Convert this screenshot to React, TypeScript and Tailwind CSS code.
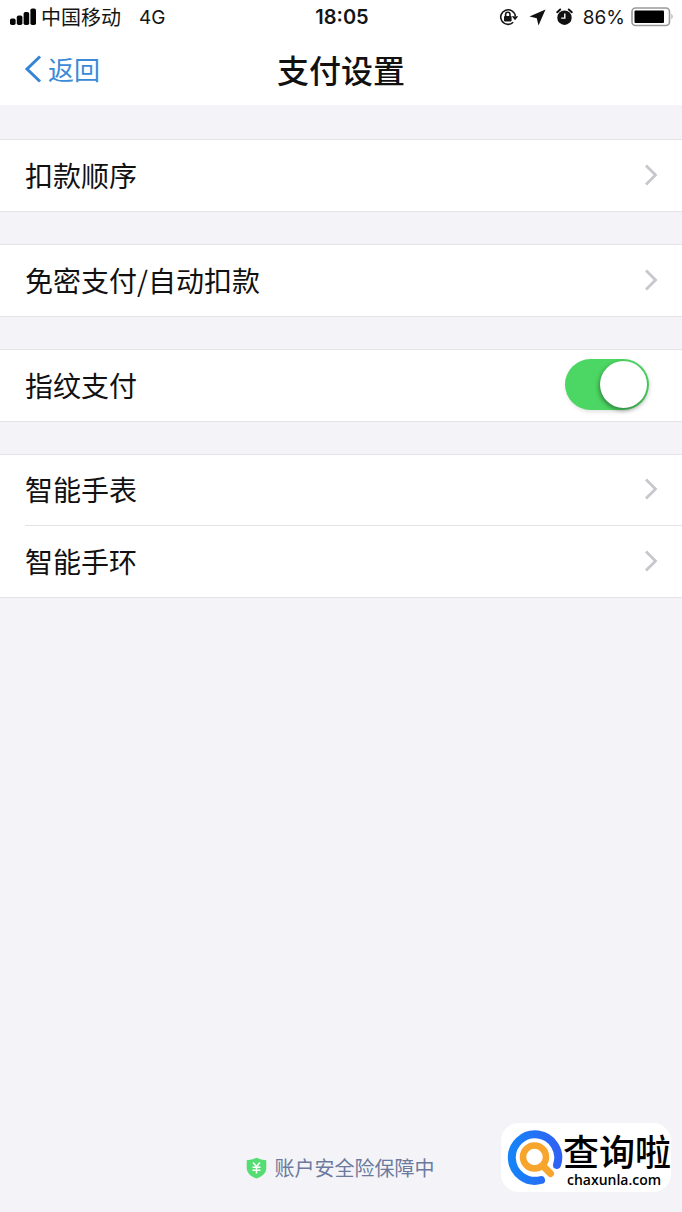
import { useState } from "react";

const groups = [
  [{ id: "order", title: "扣款顺序" }],
  [{ id: "auto", title: "免密支付/自动扣款" }],
  [{ id: "finger", title: "指纹支付", toggle: true }],
  [
    { id: "watch", title: "智能手表" },
    { id: "band", title: "智能手环" },
  ],
];

function StatusBar() {
  return (
    <div className="grid grid-cols-[1fr_auto_1fr] items-center h-[34px] pl-[10px] pr-2 font-['Inter','Noto_Sans_CJK_SC',sans-serif] text-[20px] leading-none text-[#151515]">
      <div className="flex items-center">
        <svg className="w-[27px] h-[18px] shrink-0" viewBox="0 0 27 18" fill="#050505">
          <rect x="0" y="10.5" width="5.6" height="6.5" rx="1.8" />
          <rect x="6.8" y="7.5" width="5.6" height="9.5" rx="1.8" />
          <rect x="13.6" y="4" width="5.6" height="13" rx="1.8" />
          <rect x="20.4" y="0.5" width="5.6" height="16.5" rx="1.8" />
        </svg>
        <span className="ml-1 font-['Noto_Sans_CJK_SC',sans-serif]">中国移动</span>
        <span className="ml-[18px] text-[19px]">4G</span>
      </div>
      <div className="font-semibold">18:05</div>
      <div className="flex items-center justify-end">
        {/* Rotation lock */}
        <svg className="w-[20px] h-[18px] shrink-0" viewBox="0 0 20 18" fill="none" stroke="#151515">
          <path d="M14.2 14.2A7.3 7.3 0 1 1 16.3 8.2" strokeWidth="1.6" />
          <path d="M12.8 8.2h6.4l-3.2 4z" fill="#151515" stroke="none" />
          <rect x="5" y="8" width="7.6" height="5.4" rx="0.8" fill="#151515" stroke="none" />
          <path d="M6.6 8V6.4a2.2 2.2 0 0 1 4.4 0V8" strokeWidth="1.6" />
        </svg>
        {/* Location arrow */}
        <svg className="ml-[10px] w-[17px] h-[17px] shrink-0" viewBox="0 0 17 17" fill="#111">
          <path d="M16.5 0.5 0.5 7.6l7.3 1.6 1.7 7.3z" />
        </svg>
        {/* Alarm */}
        <svg className="ml-[10px] w-[17px] h-[18px] shrink-0" viewBox="0 0 17 18">
          <circle cx="8.5" cy="9.7" r="7.2" fill="#111" />
          <path d="M1.2 4.2 4.2 1.5M15.8 4.2l-3-2.7" stroke="#111" strokeWidth="2" strokeLinecap="round" />
          <path d="M8.8 5.5v4.6H5.2" fill="none" stroke="#fff" strokeWidth="1.4" />
        </svg>
        <span className="ml-[10px] text-[19px]">86%</span>
        <svg className="ml-[6px] w-[43px] h-[20px] shrink-0" viewBox="0 0 43 20">
          <rect x="1" y="1" width="37.5" height="17.5" rx="3.5" fill="#fff" stroke="#9a9a9a" strokeWidth="1.6" />
          <rect x="3.5" y="3.5" width="29.5" height="12.5" rx="1" fill="#000" />
          <path d="M40.5 6.5q2.2 3 0 6z" fill="#9a9a9a" />
        </svg>
      </div>
    </div>
  );
}

function Chevron() {
  return (
    <svg className="w-[14px] h-[22px] shrink-0" viewBox="0 0 14 22" fill="none" stroke="#c7c7cc" strokeWidth="2.8">
      <path d="M2 1.5 11.5 11 2 20.5" />
    </svg>
  );
}

function Watermark() {
  return (
    <div className="absolute right-[11px] bottom-5 flex items-center h-[69px] pl-[6px] rounded-[18px] bg-white text-black">
      <svg className="w-[56px] h-[56px] shrink-0" viewBox="0 0 56 56" fill="none">
        <defs>
          <linearGradient id="ring" x1="0" y1="0" x2="1" y2="0">
            <stop offset="0" stopColor="#1683f8" />
            <stop offset="1" stopColor="#2f62f4" />
          </linearGradient>
        </defs>
        <path d="M50 35A23.2 23.2 0 1 0 34 50" stroke="url(#ring)" strokeWidth="8" strokeLinecap="round" />
        <circle cx="27.5" cy="27" r="11.5" stroke="#f7a52c" strokeWidth="6.5" />
        <path d="m36 36 7.5 7.5" stroke="#f7a52c" strokeWidth="7" strokeLinecap="round" />
      </svg>
      <div className="flex flex-col pt-[5px]">
        <span className="font-['Noto_Sans_CJK_SC',sans-serif] text-[36px] leading-[40px] font-medium">查询啦</span>
        <span className="pl-1 font-['Open_Sans',sans-serif] text-[14px] leading-5 font-semibold">chaxunla.com</span>
      </div>
    </div>
  );
}

export default function App() {
  const [fingerprint, setFingerprint] = useState(true);

  return (
    <div className="relative flex min-h-screen flex-col bg-[#f4f4f8] font-['Noto_Sans_CJK_SC',sans-serif] text-[#111]">
      <header className="bg-white">
        <StatusBar />
        <div className="grid grid-cols-[1fr_auto_1fr] items-center h-[71px] px-6 pb-[2px]">
          <a href="#" className="inline-flex items-center gap-[6px] text-[26px] leading-none text-[#3b8ad8]">
            <svg className="w-[18px] h-[28px] shrink-0" viewBox="0 0 18 28" fill="none" stroke="#3584d6" strokeWidth="3">
              <path d="M16 1.5 3 14l13 12.5" />
            </svg>
            <span>返回</span>
          </a>
          <h1 className="text-[32px] leading-none font-medium">支付设置</h1>
        </div>
      </header>

      <main className="flex flex-col gap-8 pt-[34px] text-[28px]">
        {groups.map((items) => (
          <section key={items[0].id} className="border-y border-[#e4e4e8] bg-white pl-[25px]">
            <div className="divide-y divide-[#e4e4e8]">
              {items.map((item) =>
                item.toggle ? (
                  <label key={item.id} className="flex items-center justify-between h-[71px] pr-[33px] pb-[2px] cursor-pointer">
                    <span>{item.title}</span>
                    <input
                      type="checkbox"
                      className="peer sr-only"
                      checked={fingerprint}
                      onChange={(e) => setFingerprint(e.target.checked)}
                    />
                    <span className="flex items-center w-[84px] h-[51px] rounded-full bg-[#dcdce0] p-[2px] shadow-[1px_2px_4px_rgba(0,0,0,0.12)] peer-checked:justify-end peer-checked:bg-[#4cd663]">
                      <span className="size-[47px] rounded-full bg-white shadow-[-1px_2px_4px_rgba(0,0,0,0.4)]" />
                    </span>
                  </label>
                ) : (
                  <button key={item.id} type="button" className="flex w-full items-center justify-between h-[71px] pr-6 pb-[2px] text-left">
                    <span>{item.title}</span>
                    <Chevron />
                  </button>
                )
              )}
            </div>
          </section>
        ))}
      </main>

      <footer className="mt-auto flex items-center justify-center gap-2 pr-[2px] pb-[29px] text-[20px] leading-[30px] text-[#6b7a9d]">
        <svg className="w-[21px] h-[22px] shrink-0" viewBox="0 0 21 22">
          <path d="M10.5 0.8Q15 3 20.3 3.2V11c0 5-4 8.5-9.8 10.5C4.7 19.5 0.7 16 0.7 11V3.2Q6 3 10.5 0.8z" fill="#54dd72" />
          <path d="m7 5.5 3.5 4 3.5-4M10.5 9.5v7M6.5 10.2h8M6.5 13.2h8" fill="none" stroke="#fff" strokeWidth="1.5" />
        </svg>
        <span>账户安全险保障中</span>
      </footer>

      <Watermark />
    </div>
  );
}
